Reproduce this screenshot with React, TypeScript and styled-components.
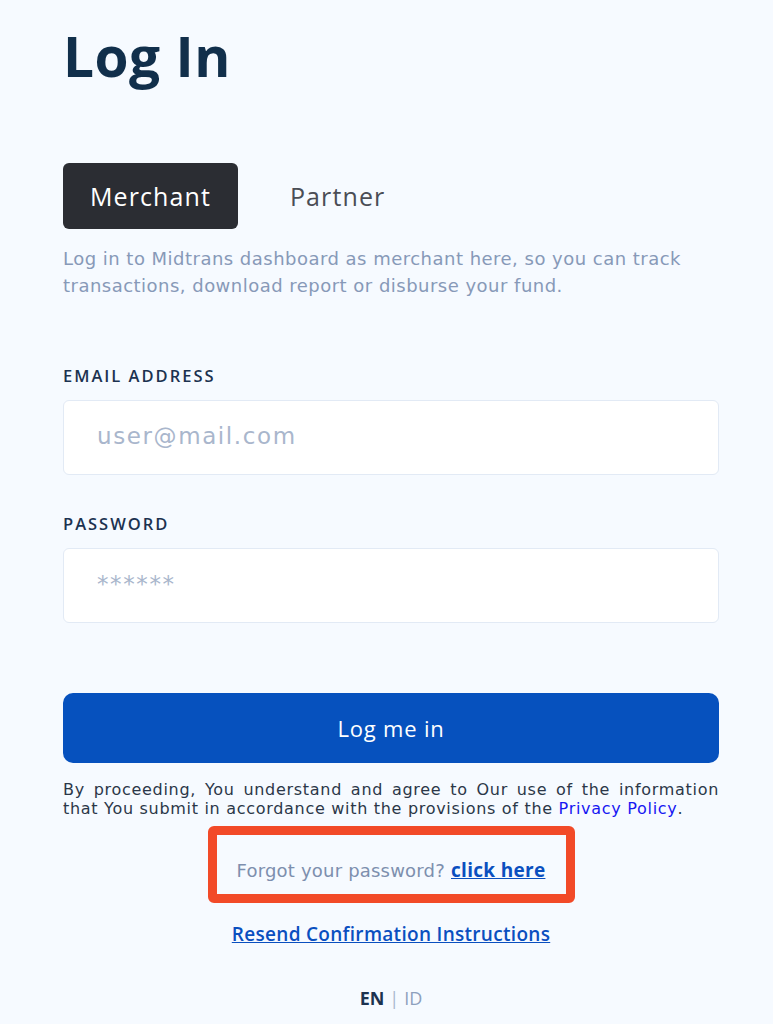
import React from 'react';
import styled, { createGlobalStyle } from 'styled-components';

const GlobalStyle = createGlobalStyle`
  html, body {
    margin: 0;
    padding: 0;
    background: #f6faff;
  }
  body {
    font-family: 'DejaVu Sans', 'Open Sans', sans-serif;
  }
`;

const Page = styled.div`
  padding: 20px 54px 20px 63px;
  min-height: 1024px;
  box-sizing: border-box;
  background: #f6faff;
`;

const Title = styled.h1`
  margin: 0;
  font-family: 'Open Sans', sans-serif;
  font-size: 55px;
  line-height: 72px;
  font-weight: 700;
  color: #112f4b;
  letter-spacing: 0.5px;
`;

const Tabs = styled.div`
  display: flex;
  align-items: center;
  gap: 52px;
  margin-top: 71px;
`;

const Tab = styled.button<{ $active?: boolean }>`
  height: 66px;
  padding: ${(p) => (p.$active ? '0 27px' : '0')};
  border: none;
  border-radius: 6px;
  font-family: 'Open Sans', sans-serif;
  font-size: 25px;
  font-weight: 500;
  letter-spacing: 1.1px;
  background: ${(p) => (p.$active ? '#2b2d33' : 'transparent')};
  color: ${(p) => (p.$active ? '#ffffff' : '#4a4d55')};
`;

const Description = styled.p`
  margin: 16px 0 0;
  font-size: 18px;
  line-height: 27px;
  letter-spacing: 0.48px;
  color: #8799b8;
`;

const Form = styled.div`
  display: flex;
  flex-direction: column;
  gap: 37px;
  margin-top: 65px;
`;

const Field = styled.div`
  display: flex;
  flex-direction: column;
  gap: 13px;
`;

const Label = styled.label`
  font-family: 'Open Sans', sans-serif;
  font-size: 16.5px;
  font-weight: 600;
  letter-spacing: 2px;
  color: #1c3250;
`;

const Input = styled.input`
  height: 75px;
  box-sizing: border-box;
  border: 1.5px solid #e2eaf5;
  border-radius: 6px;
  background: #ffffff;
  padding: 0 33px 3px;
  font-family: inherit;
  font-size: 23px;
  letter-spacing: 1.6px;
  color: #1c3250;
  outline: none;

  &::placeholder {
    color: #a9b6cc;
  }
`;

const SubmitButton = styled.button`
  margin-top: 70px;
  width: 100%;
  height: 70px;
  border: none;
  border-radius: 10px;
  background: #0651be;
  color: #ffffff;
  font-family: 'Open Sans', sans-serif;
  font-size: 22px;
  font-weight: 500;
  letter-spacing: 0.8px;
`;

const Notice = styled.p`
  margin: 17px 0 0;
  font-size: 16px;
  line-height: 19px;
  letter-spacing: 0.7px;
  text-align: justify;
  color: #2b3748;
`;

const PolicyLink = styled.a`
  display: inline-block;
  color: #1717f2;
  text-decoration: none;
`;

const Links = styled.div`
  display: flex;
  flex-direction: column;
  align-items: center;
`;

const Highlight = styled.div`
  margin-top: 8px;
  width: 367px;
  height: 77px;
  box-sizing: border-box;
  border: 9px solid #f24a28;
  border-radius: 6px;
  display: flex;
  align-items: flex-end;
  justify-content: center;
  padding-bottom: 11px;
`;

const ForgotText = styled.span`
  font-size: 18px;
  letter-spacing: 0.2px;
  color: #7d8fae;
`;

const ClickHere = styled.a`
  margin-left: 6px;
  font-family: 'Open Sans', sans-serif;
  font-weight: 700;
  font-size: 19px;
  letter-spacing: 0.3px;
  color: #0a4fbf;
  text-decoration: underline;
`;

const Resend = styled.a`
  margin-top: 18px;
  font-family: 'Open Sans', sans-serif;
  font-size: 19px;
  font-weight: 600;
  letter-spacing: 0.3px;
  color: #0a4fbf;
  text-decoration: underline;
`;

const Lang = styled.div`
  margin-top: 39px;
  font-family: 'Open Sans', sans-serif;
  font-size: 18px;
  color: #8da0bd;
`;

const LangActive = styled.span`
  font-weight: 700;
  color: #1c3250;
`;

const Sep = styled.span`
  margin: 0 5px;
  color: #a9b6cc;
`;

export default function App() {
  return (
    <>
      <GlobalStyle />
      <Page>
        <Title>Log In</Title>
        <Tabs>
          <Tab $active>Merchant</Tab>
          <Tab>Partner</Tab>
        </Tabs>
        <Description>
          Log in to Midtrans dashboard as merchant here, so you can track transactions, download report or
          disburse your fund.
        </Description>
        <Form>
          <Field>
            <Label>EMAIL ADDRESS</Label>
            <Input type="email" placeholder="user@mail.com" />
          </Field>
          <Field>
            <Label>PASSWORD</Label>
            <Input type="password" placeholder="******" />
          </Field>
        </Form>
        <SubmitButton>Log me in</SubmitButton>
        <Notice>
          By proceeding, You understand and agree to Our use of the information that You submit in accordance
          with the provisions of the <PolicyLink href="#">Privacy Policy</PolicyLink>.
        </Notice>
        <Links>
          <Highlight>
            <ForgotText>
              Forgot your password?<ClickHere href="#">click here</ClickHere>
            </ForgotText>
          </Highlight>
          <Resend href="#">Resend Confirmation Instructions</Resend>
          <Lang>
            <LangActive>EN</LangActive>
            <Sep>|</Sep>ID
          </Lang>
        </Links>
      </Page>
    </>
  );
}
